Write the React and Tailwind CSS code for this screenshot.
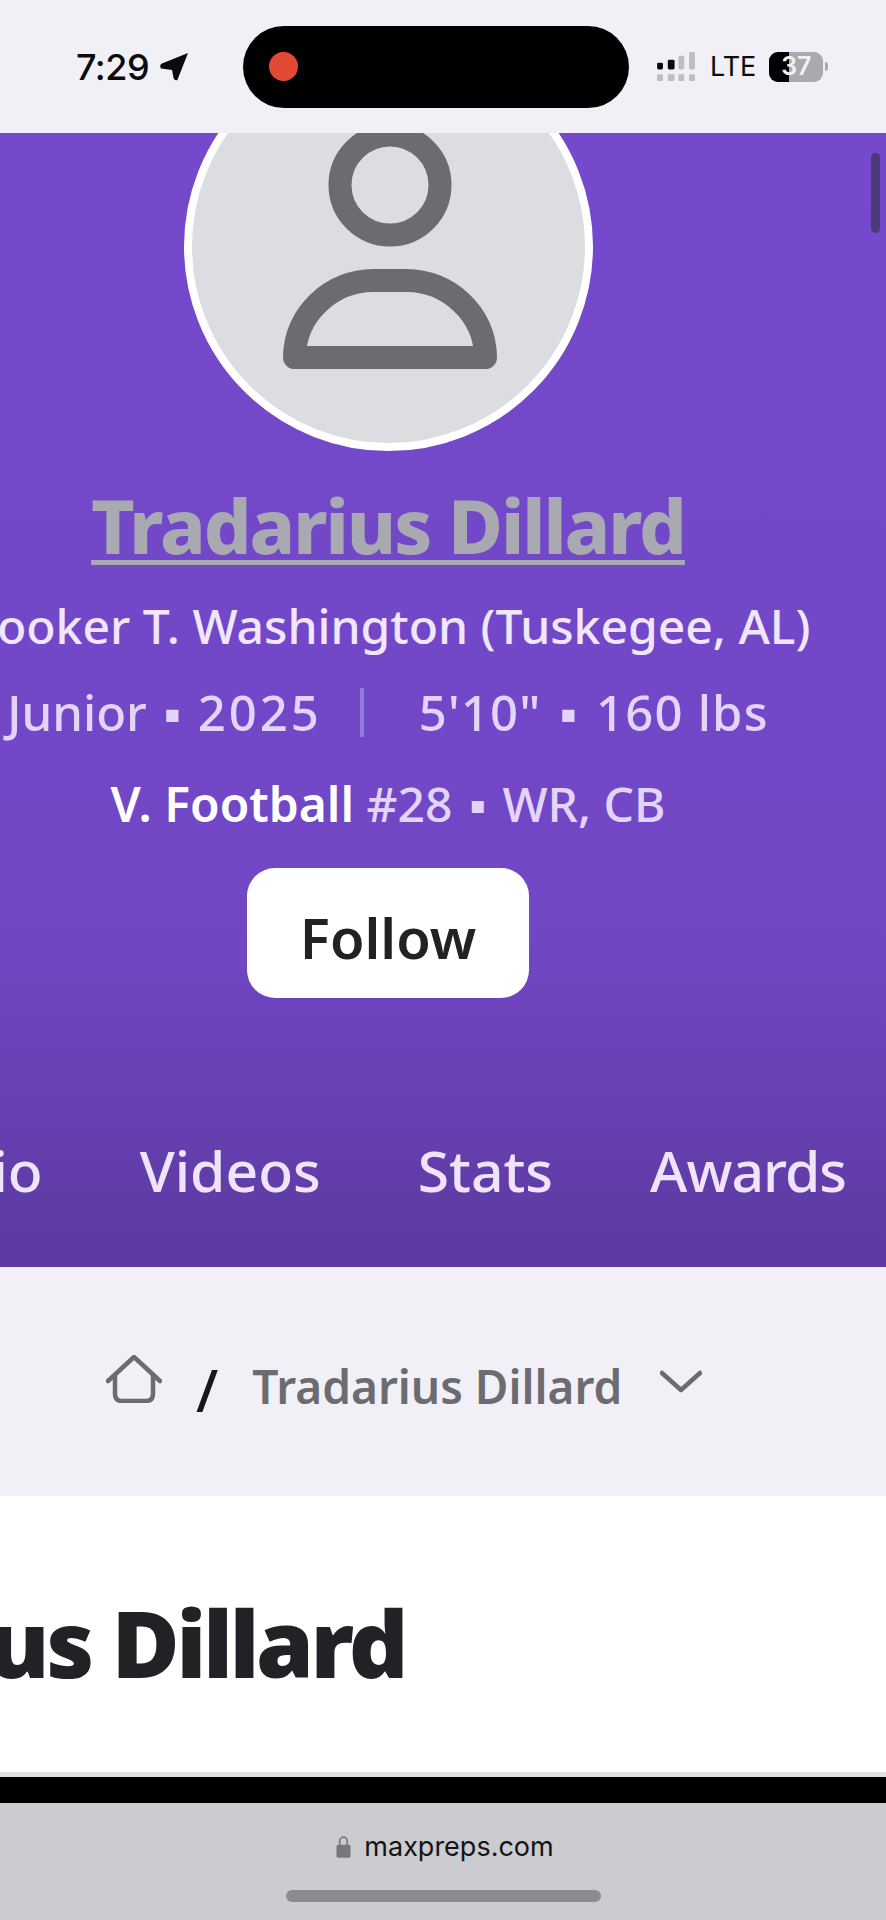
import React from 'react';

const font = { fontFamily: '"Noto Sans", "Open Sans", sans-serif' };

function StatusBar() {
  return (
    <div className="h-[133px] bg-[#f0f0f6] flex items-center pl-[76px] shrink-0 font-['Inter',sans-serif]">
      <div className="flex items-center w-[167px] shrink-0">
        <span className="text-[36px] font-medium tracking-[-0.5px] text-[#0b0b0d] leading-none">7:29</span>
        <svg className="ml-[10px]" width="30" height="29" viewBox="0 0 31 30">
          <path d="M30 1 L19 29 Q16 30 15 27 L13.500 18.500 L2 17 Q0 14 3 12 Z" fill="#0b0b0d" />
        </svg>
      </div>
      <div className="h-[82px] w-[386px] shrink-0 bg-black rounded-[41px] flex items-center pl-[26px]">
        <div className="w-[29px] h-[29px] rounded-full bg-[#e34a36]" />
      </div>
      <div className="flex items-center ml-[27px] shrink-0">
        <svg width="41" height="29" viewBox="0 0 40 30">
          <rect x="0" y="11" width="6" height="7" rx="1.500" fill="#0b0b0d" />
          <rect x="11" y="8" width="7" height="10" rx="1.500" fill="#0b0b0d" />
          <rect x="22" y="4" width="6" height="14" rx="1.500" fill="#bdbdc2" />
          <rect x="33" y="0" width="6" height="18" rx="1.500" fill="#bdbdc2" />
          <rect x="0" y="23" width="6" height="7" rx="1" fill="#bdbdc2" />
          <rect x="11" y="23" width="7" height="7" rx="1" fill="#bdbdc2" />
          <rect x="22" y="23" width="6" height="7" rx="1" fill="#bdbdc2" />
          <rect x="33" y="23" width="6" height="7" rx="1" fill="#bdbdc2" />
        </svg>
        <span className="ml-[13px] text-[27px] font-normal text-[#0b0b0d] leading-none">LTE</span>
        <div className="relative ml-[13px] w-[54px] h-[30px] rounded-[9px] overflow-hidden bg-[#a9a9ae] flex items-center justify-center">
          <div className="absolute left-0 top-0 bottom-0 w-[20px] bg-black" />
          <span className="relative text-[25px] font-semibold text-[#f2f2f5] leading-none">37</span>
        </div>
        <div className="ml-[2px] w-[3px] h-[9px] rounded-r-full bg-[#a9a9ae]" />
      </div>
    </div>
  );
}

function Hero() {
  return (
    <section className="relative h-[1134px] shrink-0 overflow-hidden bg-gradient-to-b from-[#7449cb] via-[#7247c6] via-[70%] to-[#5c3aa0]">
      <div className="w-[776px] flex flex-col items-center">
        <div className="-mt-[91px] w-[409px] h-[409px] shrink-0 rounded-full border-[8px] border-white bg-[#dcdde1] flex justify-center pt-[73px]">
          <svg width="214" height="246" viewBox="0 0 214 246" fill="none" stroke="#6c6c70" strokeWidth="23" strokeLinejoin="round" className="ml-[3px]">
            <circle cx="107" cy="62" r="50" />
            <path d="M11.500 234.500 C11.500 190 50 157.500 90 157.500 H124 C164 157.500 202.500 190 202.500 234.500 Z" />
          </svg>
        </div>
        <a className="mt-[27px] text-[75px] leading-[94px] font-extrabold text-[#a9a9b1] underline decoration-[5px] underline-offset-[6px] whitespace-nowrap tracking-[-2px]">Tradarius Dillard</a>
        <div className="mt-[24px] text-[48px] leading-[60px] font-medium text-[#f0e6fd] whitespace-nowrap">Booker T. Washington (Tuskegee, AL)</div>
        <div className="mt-[26px] flex items-center text-[49px] leading-[60px] font-medium text-[#e3d4fa] whitespace-nowrap">
          <span>Junior <span className="mx-[4px]">▪</span> <span className="tracking-[3px]">2025</span></span>
          <span className="ml-[38px] mr-[55px] w-[4px] h-[49px] bg-[#9479d8]" />
          <span className="tracking-[1.200px]">5'10" <span className="mx-[4px]">▪</span> 160 lbs</span>
        </div>
        <div className="mt-[33px] text-[48px] leading-[58px] font-medium text-[#e3d4fa] whitespace-nowrap">
          <span className="text-white font-semibold">V. Football</span> #28 <span className="mx-[4px]">▪</span> WR, CB
        </div>
        <button className="mt-[35px] w-[282px] h-[130px] rounded-[28px] bg-white pt-[8px] text-[56px] font-semibold text-[#222226]">Follow</button>
      </div>
      <div className="mt-[140px] flex justify-end gap-[97px] pr-[40px] whitespace-nowrap text-[57px] leading-[65px] font-medium text-[#efe4fb]">
        <span>Bio</span>
        <span>Videos</span>
        <span>Stats</span>
        <span className="tracking-[-1px]">Awards</span>
      </div>
      {/* scrollbar thumb */}
      <div className="absolute right-[6px] top-[20px] w-[9px] h-[80px] rounded-full bg-[#4b3a78]" />
    </section>
  );
}

function Breadcrumb() {
  return (
    <nav className="h-[229px] shrink-0 bg-[#f0f0f6] flex items-center pl-[106px] pt-[8px]">
      <svg width="56" height="48" viewBox="0 0 56 48" fill="none" stroke="#6c6c70" strokeWidth="4.500" strokeLinecap="round" strokeLinejoin="round" className="-mt-[14px]">
        <path d="M2 26 L28 2 L54 26" />
        <path d="M9 20 V39 Q9 46 16 46 H40 Q47 46 47 39 V20" />
      </svg>
      <span className="ml-[34px] text-[58px] font-medium text-[#18181b] leading-none mt-[8px]">/</span>
      <span className="ml-[34px] text-[46px] font-semibold text-[#6b6b70] leading-none whitespace-nowrap">Tradarius Dillard</span>
      <svg width="42" height="23" viewBox="0 0 42 23" fill="none" stroke="#6c6c70" strokeWidth="4.500" strokeLinecap="round" strokeLinejoin="round" className="ml-[38px] -mt-[8px]">
        <path d="M2 3 L21 20 L40 3" />
      </svg>
    </nav>
  );
}

export default function App() {
  return (
    <div className="w-[886px] h-[1920px] overflow-hidden flex flex-col bg-white" style={font}>
      <StatusBar />
      <Hero />
      <Breadcrumb />
      <div className="h-[281px] shrink-0 bg-white overflow-hidden flex items-center justify-end pr-[481px] border-b-[5px] border-[#e2e2e5]">
        <h1 className="text-[93px] font-black text-[#222226] whitespace-nowrap leading-none tracking-[-3.500px] mt-[17px]">Tradarius Dillard</h1>
      </div>
      <div className="h-[26px] shrink-0 bg-black" />
      <footer className="flex-1 bg-[#cbcbd0] flex flex-col items-center">
        <div className="mt-[30px] ml-[4px] flex items-center font-['Inter',sans-serif]">
          <svg width="15" height="23" viewBox="0 0 16 24">
            <path d="M4 11 V6 a4 4 0 0 1 8 0 V11" fill="none" stroke="#77777c" strokeWidth="1.800" />
            <rect x="0.500" y="10" width="15" height="14" rx="2" fill="#77777c" />
          </svg>
          <span className="ml-[13px] text-[27px] leading-none text-[#141416]">maxpreps.com</span>
        </div>
        <div className="mt-auto mb-[18px] ml-[1px] w-[315px] h-[12px] rounded-full bg-[#8c8c90]" />
      </footer>
    </div>
  );
}
